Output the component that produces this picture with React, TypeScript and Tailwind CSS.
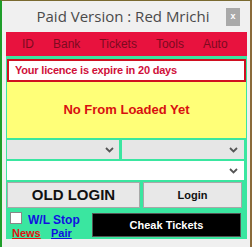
import React from "react";

const Chevron = () => (
  <svg width="9" height="6" viewBox="0 0 9 6" className="shrink-0">
    <path d="M1 1 L4.5 4.5 L8 1" stroke="#555" strokeWidth="1.8" fill="none" />
  </svg>
);

export default function App() {
  const font = { fontFamily: '"Liberation Sans", Arial, sans-serif' };
  return (
    <div
      className="relative w-[252px] h-[247px] bg-[#f0f0f0] border-l-2 border-l-[#1f9e2a] border-t border-t-[#7a6a30] border-r-2 border-r-[#8a6a3a] overflow-hidden"
      style={font}
    >
      <div
        className="h-[31px] flex items-center justify-center text-[15px] text-[#4a4a4a] pr-[6px]"
        style={{ fontFamily: '"Open Sans", "Noto Sans", sans-serif' }}
      >
        Paid Version : Red Mrichi
      </div>
      <div className="absolute left-[224px] top-[7px] w-[14px] h-[18px] bg-[#a9a9a9] flex items-center justify-center text-white text-[9px] font-bold">
        x
      </div>
      <div className="ml-[4px] w-[241px] h-[24px] bg-[#e8123e] flex items-center pl-[16px] gap-[19px] text-[12px] text-[#7d0a1e]">
        <span>ID</span>
        <span>Bank</span>
        <span>Tickets</span>
        <span>Tools</span>
        <span>Auto</span>
      </div>
      <div className="ml-[4px] w-[241px] h-[183px] bg-[#3ae6a0] px-[1px] pt-[3px] flex flex-col">
        <div className="h-[23px] bg-white border-2 border-[#d01020] flex items-center pl-[6px] text-[11px] font-bold text-[#d0103a]">
          <span className="tracking-[-0.2px]">Your licence is expire in 20 days</span>
        </div>
        <div className="h-[56px] bg-[#ffff78] flex items-center justify-center text-[13px] font-bold text-[#d81010]">
          No From Loaded Yet
        </div>
        <div className="mt-[2px] flex gap-[3px] h-[19px]">
          <div className="w-[112px] bg-[#e6e6e6] flex items-center justify-end pr-[5px]">
            <Chevron />
          </div>
          <div className="flex-1 mr-[2px] bg-[#e6e6e6] flex items-center justify-end pr-[6px]">
            <Chevron />
          </div>
        </div>
        <div className="mt-[2px] mr-[2px] h-[19px] bg-white flex items-center justify-end pr-[6px]">
          <Chevron />
        </div>
        <div className="mt-[2px] flex gap-[3px] h-[26px]">
          <div className="w-[133px] bg-[#e8e8e8] border border-[#a8a8a8] flex items-center justify-center text-[15px] font-bold text-[#111]">
            OLD LOGIN
          </div>
          <div className="w-[99px] bg-[#e8e8e8] border border-[#a8a8a8] flex items-center justify-center text-[11px] font-bold text-[#111]">
            Login
          </div>
        </div>
        <div className="mt-[2px] flex h-[28px]">
          <div className="w-[84px] relative">
            <div className="absolute left-[3px] top-[2px] w-[12px] h-[12px] bg-white border border-[#888]" />
            <div className="absolute left-[21px] top-[1px] text-[12px] font-bold text-[#1010e0]">W/L Stop</div>
            <div className="absolute left-[5px] top-[15px] text-[11px] font-bold text-[#e01010] underline">News</div>
            <div className="absolute left-[44px] top-[15px] text-[11px] font-bold text-[#1010e0] underline">Pair</div>
          </div>
          <div className="ml-[1px] mt-[3px] w-[149px] h-[24px] bg-black flex items-center justify-center text-[11px] font-bold text-white border border-[#555]">
            Cheak Tickets
          </div>
        </div>
      </div>
    </div>
  );
}
